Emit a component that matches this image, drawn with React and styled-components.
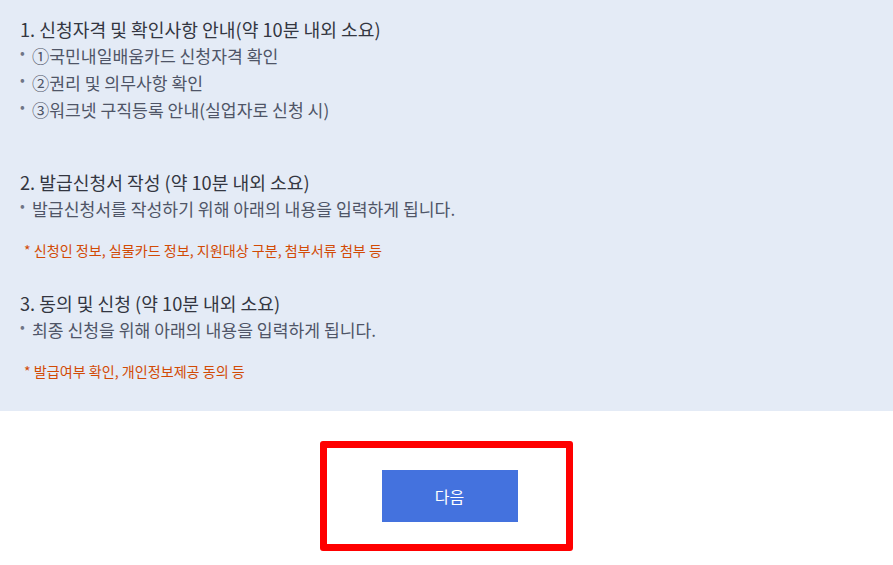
import React from 'react'
import styled, { createGlobalStyle } from 'styled-components'

const GlobalStyle = createGlobalStyle`
    body {
        margin: 0;
        background: #ffffff;
        font-family: "Noto Sans CJK KR", "Noto Sans", sans-serif;
    }
`

const InfoPanel = styled.div`
    background-color: #e4ebf6;
    padding: 16px 20px 30px;
`
const Section = styled.div`
    margin-bottom: ${props => props.$gap || 0}px;
`
const SectionTitle = styled.h3`
    margin: 0;
    font-size: 18.2px;
    font-weight: 400;
    line-height: 26px;
    color: #333641;
`
const BulletList = styled.ul`
    list-style: none;
    margin: 0;
    padding: 0;
`
const BulletItem = styled.li`
    position: relative;
    padding-left: 12px;
    font-size: 17.2px;
    line-height: 27px;
    color: #4f5567;

    &::before {
        content: "•";
        position: absolute;
        left: 0;
        top: -3px;
        font-size: 14px;
        color: #6f7585;
    }
`
const Note = styled.p`
    margin: 18px 0 0 4px;
    font-size: 14.1px;
    line-height: 20px;
    color: #d24a05;
`
const ButtonArea = styled.div`
    display: flex;
    justify-content: center;
    padding-top: 30px;
`
const Highlight = styled.div`
    box-sizing: border-box;
    width: 253px;
    height: 110px;
    border: 7px solid #ff0000;
    border-radius: 3px;
    display: flex;
    align-items: center;
    justify-content: center;
`
const NextButton = styled.button`
    width: 136px;
    height: 52px;
    border: none;
    background: #4472de;
    color: #ffffff;
    font-family: "Noto Sans CJK KR", sans-serif;
    font-size: 16px;
    margin-left: 6px;
    cursor: pointer;
`

const sections = [
    {
        title: '1. 신청자격 및 확인사항 안내(약 10분 내외 소요)',
        items: ['①국민내일배움카드 신청자격 확인', '②권리 및 의무사항 확인', '③워크넷 구직등록 안내(실업자로 신청 시)'],
        gap: 46,
    },
    {
        title: '2. 발급신청서 작성 (약 10분 내외 소요)',
        items: ['발급신청서를 작성하기 위해 아래의 내용을 입력하게 됩니다.'],
        note: '* 신청인 정보, 실물카드 정보, 지원대상 구분, 첨부서류 첨부 등',
        gap: 30,
    },
    {
        title: '3. 동의 및 신청 (약 10분 내외 소요)',
        items: ['최종 신청을 위해 아래의 내용을 입력하게 됩니다.'],
        note: '* 발급여부 확인, 개인정보제공 동의 등',
    },
]

export default function App() {
    return (
        <>
            <GlobalStyle />
            <InfoPanel>
                {sections.map(s => (
                    <Section key={s.title} $gap={s.gap}>
                        <SectionTitle>{s.title}</SectionTitle>
                        <BulletList>
                            {s.items.map(item => <BulletItem key={item}>{item}</BulletItem>)}
                        </BulletList>
                        {s.note && <Note>{s.note}</Note>}
                    </Section>
                ))}
            </InfoPanel>
            <ButtonArea>
                <Highlight>
                    <NextButton>다음</NextButton>
                </Highlight>
            </ButtonArea>
        </>
    )
}
